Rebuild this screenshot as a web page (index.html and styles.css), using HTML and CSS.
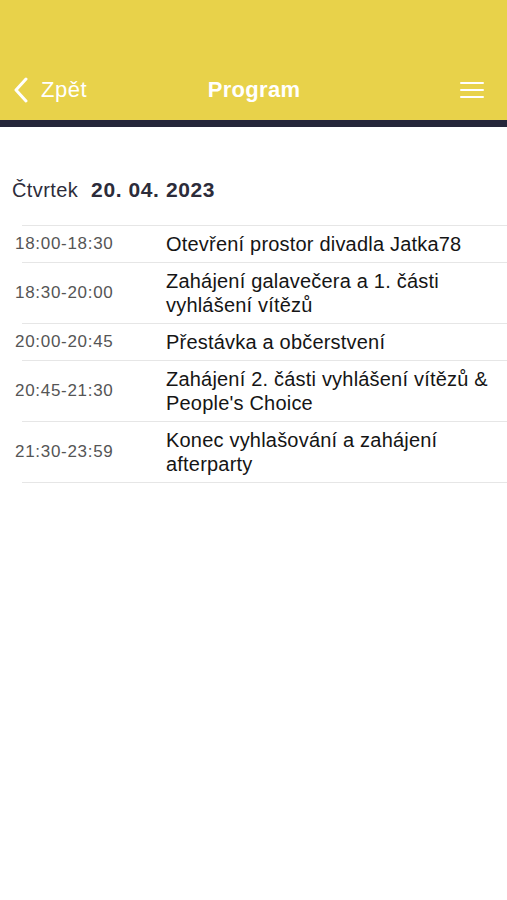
FILE: index.html
```html
<!DOCTYPE html>
<html lang="cs">

<head>
    <meta charset="UTF-8">
    <meta name="viewport" content="width=device-width, initial-scale=1.0">
    <title>Program</title>
    <link rel="stylesheet" href="styles.css">
</head>

<body>
    <header class="topbar">
        <div class="nav">
            <a class="back" href="#">
                <svg width="16" height="26" viewBox="0 0 16 26">
                    <path d="M13 2 L3 13 L13 24" fill="none" stroke="#fff" stroke-width="3" stroke-linecap="round" stroke-linejoin="round" />
                </svg>
                <span>Zpět</span>
            </a>
            <h1>Program</h1>
            <div class="menu">
                <span></span>
                <span></span>
                <span></span>
            </div>
        </div>
    </header>
    <div class="stripe"></div>

    <main class="content">
        <div class="day">
            <span class="day-name">Čtvrtek</span>
            <span class="day-date">20. 04. 2023</span>
        </div>

        <ul class="schedule">
            <li>
                <span class="time">18:00-18:30</span>
                <span class="title">Otevření prostor divadla Jatka78</span>
            </li>
            <li>
                <span class="time">18:30-20:00</span>
                <span class="title">Zahájení galavečera a 1. části vyhlášení vítězů</span>
            </li>
            <li>
                <span class="time">20:00-20:45</span>
                <span class="title">Přestávka a občerstvení</span>
            </li>
            <li>
                <span class="time">20:45-21:30</span>
                <span class="title">Zahájení 2. části vyhlášení vítězů &amp; People's Choice</span>
            </li>
            <li>
                <span class="time">21:30-23:59</span>
                <span class="title">Konec vyhlašování a zahájení afterparty</span>
            </li>
        </ul>
    </main>
</body>

</html>
```

FILE: styles.css
```css
body {
    margin: 0;
    font-family: "Liberation Sans", Arial, sans-serif;
    background-color: #fff;
    color: #1a1a1a;
}

.topbar {
    height: 120px;
    background-color: #e8d24a;
    display: flex;
    flex-direction: column;
    justify-content: flex-end;
}

.nav {
    height: 60px;
    display: flex;
    align-items: center;
    justify-content: space-between;
    padding: 0 23px 0 13px;
}

.back {
    display: flex;
    align-items: center;
    gap: 12px;
    color: #fff;
    text-decoration: none;
    font-size: 22px;
    letter-spacing: 0.5px;
    width: 131px;
}

.nav h1 {
    margin: 0;
    color: #fff;
    font-size: 22px;
    font-weight: bold;
    letter-spacing: 0.3px;
}

.menu {
    width: 120px;
    display: flex;
    flex-direction: column;
    align-items: flex-end;
    gap: 5px;
}

.menu span {
    display: block;
    width: 24px;
    height: 2px;
    background-color: #fff;
    border-radius: 1px;
}

.stripe {
    height: 7px;
    background-color: #25263a;
}

.content {
    padding-top: 51px;
}

.day {
    padding-left: 12px;
    font-size: 20px;
    letter-spacing: 0.4px;
    color: #2c2c3a;
    margin-bottom: 23px;
}

.day-name {
    margin-right: 7px;
}

.day-date {
    font-weight: bold;
    font-size: 21px;
    letter-spacing: 0.6px;
}

.schedule {
    list-style: none;
    margin: 0 0 0 22px;
    padding: 0;
    border-top: 1px solid #e6e6e6;
}

.schedule li {
    display: flex;
    align-items: center;
    padding: 6px 0;
    border-bottom: 1px solid #e6e6e6;
}

.time {
    width: 151px;
    margin-left: -7px;
    flex-shrink: 0;
    font-size: 17px;
    letter-spacing: 0.7px;
    color: #555;
}

.title {
    font-size: 20px;
    line-height: 24px;
    letter-spacing: 0.2px;
    color: #151515;
    padding-right: 14px;
}
```
